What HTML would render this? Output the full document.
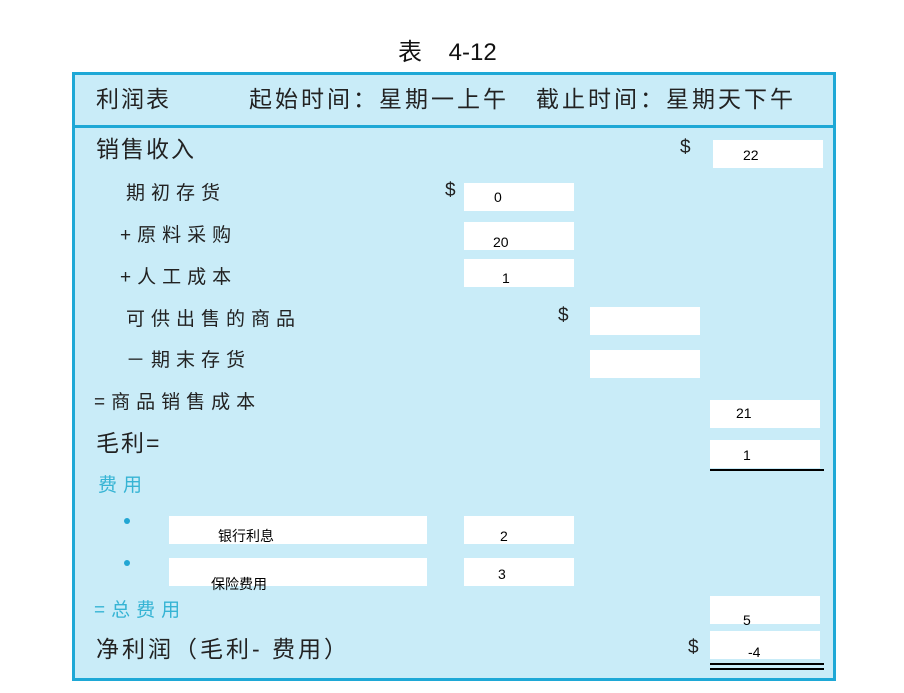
<!DOCTYPE html>
<html><head><meta charset="utf-8"><style>
body{margin:0;width:904px;height:693px;background:#fff;position:relative;overflow:hidden;font-family:"Liberation Sans","Noto Sans CJK SC",sans-serif}
.a{position:absolute;white-space:nowrap}
.box{position:absolute;background:#fff;font-size:14px;color:#000}
.h{font-size:23px;color:#222;letter-spacing:2px}
.s{font-size:19px;color:#222;letter-spacing:6px}
.c{color:#36b4d4}
.dot{position:absolute;width:6px;height:6px;border-radius:50%;background:#22a6d3}
</style></head><body>
<div class="a" style="left:398px;top:32px;font-size:24px;color:#111">表&nbsp;&nbsp;&nbsp;&nbsp;4-12</div>
<div class="a" style="left:72px;top:72px;width:758px;height:603px;border:3px solid #1ea8d6;background:#c9ecf8"></div>
<div class="a" style="left:75px;top:125px;width:758px;height:3px;background:#1ea8d6"></div>
<div class="a h" style="left:96px;top:80px">利润表</div>
<div class="a h" style="left:249px;top:80px;letter-spacing:3px">起始时间：星期一上午</div>
<div class="a h" style="left:536px;top:80px;letter-spacing:3px">截止时间：星期天下午</div>
<div class="a h" style="left:96px;top:130px">销售收入</div>
<div class="a s" style="left:680px;top:137px">$</div>
<div class="box" style="left:713px;top:140px;width:110px;height:28px"><span class="a" style="left:30px;top:7px">22</span></div>
<div class="a s" style="left:126px;top:178px">期初存货</div>
<div class="a s" style="left:445px;top:180px">$</div>
<div class="box" style="left:464px;top:183px;width:110px;height:28px"><span class="a" style="left:30px;top:6px">0</span></div>
<div class="a s" style="left:120px;top:220px">+原料采购</div>
<div class="box" style="left:464px;top:222px;width:110px;height:28px"><span class="a" style="left:29px;top:12px">20</span></div>
<div class="a s" style="left:120px;top:262px">+人工成本</div>
<div class="box" style="left:464px;top:259px;width:110px;height:28px"><span class="a" style="left:38px;top:11px">1</span></div>
<div class="a s" style="left:126px;top:304px">可供出售的商品</div>
<div class="a s" style="left:558px;top:305px">$</div>
<div class="box" style="left:590px;top:307px;width:110px;height:28px"></div>
<div class="a s" style="left:126px;top:345px">－期末存货</div>
<div class="box" style="left:590px;top:350px;width:110px;height:28px"></div>
<div class="a s" style="left:94px;top:387px">=商品销售成本</div>
<div class="box" style="left:710px;top:400px;width:110px;height:28px"><span class="a" style="left:26px;top:5px">21</span></div>
<div class="a h" style="left:96px;top:424px">毛利=</div>
<div class="box" style="left:710px;top:440px;width:110px;height:28px"><span class="a" style="left:33px;top:7px">1</span></div>
<div class="a" style="left:710px;top:469px;width:114px;height:2px;background:#000"></div>
<div class="a s c" style="left:98px;top:470px">费用</div>
<div class="dot" style="left:124px;top:518px"></div>
<div class="box" style="left:169px;top:516px;width:258px;height:28px"><span class="a" style="left:49px;top:10px">银行利息</span></div>
<div class="box" style="left:464px;top:516px;width:110px;height:28px"><span class="a" style="left:36px;top:12px">2</span></div>
<div class="dot" style="left:124px;top:560px"></div>
<div class="box" style="left:169px;top:558px;width:258px;height:28px"><span class="a" style="left:42px;top:16px">保险费用</span></div>
<div class="box" style="left:464px;top:558px;width:110px;height:28px"><span class="a" style="left:34px;top:8px">3</span></div>
<div class="a s c" style="left:94px;top:595px">=总费用</div>
<div class="box" style="left:710px;top:596px;width:110px;height:28px"><span class="a" style="left:33px;top:16px">5</span></div>
<div class="a h" style="left:96px;top:630px;letter-spacing:3px">净利润（毛利- 费用）</div>
<div class="a s" style="left:688px;top:637px">$</div>
<div class="box" style="left:710px;top:631px;width:110px;height:28px"><span class="a" style="left:38px;top:13px">-4</span></div>
<div class="a" style="left:710px;top:663px;width:114px;height:2px;background:#000"></div>
<div class="a" style="left:710px;top:668px;width:114px;height:2px;background:#000"></div>
</body></html>
